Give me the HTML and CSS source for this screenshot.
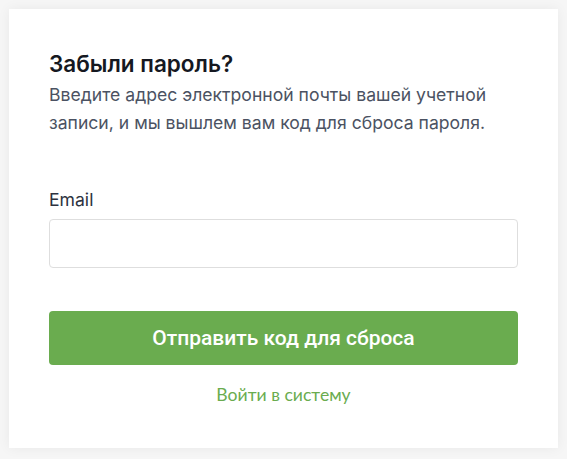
FILE: index.html
```html
<!DOCTYPE html>
<html lang="ru">

<head>
    <meta charset="UTF-8">
    <meta name="viewport" content="width=device-width, initial-scale=1.0">
    <title>Забыли пароль?</title>
    <link rel="stylesheet" href="styles.css">
</head>

<body>
    <div class="card">
        <h1 class="title">Забыли пароль?</h1>
        <p class="subtitle">Введите адрес электронной почты вашей учетной записи, и мы вышлем вам код для сброса пароля.</p>

        <form class="form">
            <label class="label" for="email">Email</label>
            <input type="email" class="input" id="email">

            <button type="button" class="button">Отправить код для сброса</button>
        </form>

        <a href="#" class="link">Войти в систему</a>
    </div>
</body>

</html>
```

FILE: styles.css
```css
body {
    margin: 0;
    padding: 9px;
    background-color: #f6f6f6;
    font-family: Inter, "Noto Sans", sans-serif;
}

.card {
    background-color: #fff;
    box-shadow: 0 0 12px rgba(0, 0, 0, 0.06);
    padding: 43px 40px 40px;
    min-height: 356px;
}

.title {
    margin: 0;
    font-size: 22.5px;
    font-weight: 600;
    line-height: 24px;
    color: #151821;
}

.subtitle {
    margin: 5px 0 0;
    font-size: 17.6px;
    line-height: 28px;
    color: #4b5262;
}

.form {
    display: flex;
    flex-direction: column;
    margin-top: 51px;
}

.label {
    font-size: 17.6px;
    line-height: 24px;
    color: #2d3240;
    margin-bottom: 7px;
}

.input {
    height: 49px;
    box-sizing: border-box;
    border: 1px solid #dedede;
    border-radius: 4px;
    padding: 0 12px;
    font-size: 16px;
}

.button {
    margin-top: 43px;
    height: 54px;
    border: none;
    border-radius: 4px;
    background-color: #6aac4f;
    color: #fff;
    font-family: Roboto, sans-serif;
    font-size: 21px;
    font-weight: 500;
}

.link {
    display: block;
    margin-top: 18px;
    text-align: center;
    font-family: Lato, sans-serif;
    font-size: 17.6px;
    line-height: 24px;
    color: #6aac4f;
    text-decoration: none;
}
```
